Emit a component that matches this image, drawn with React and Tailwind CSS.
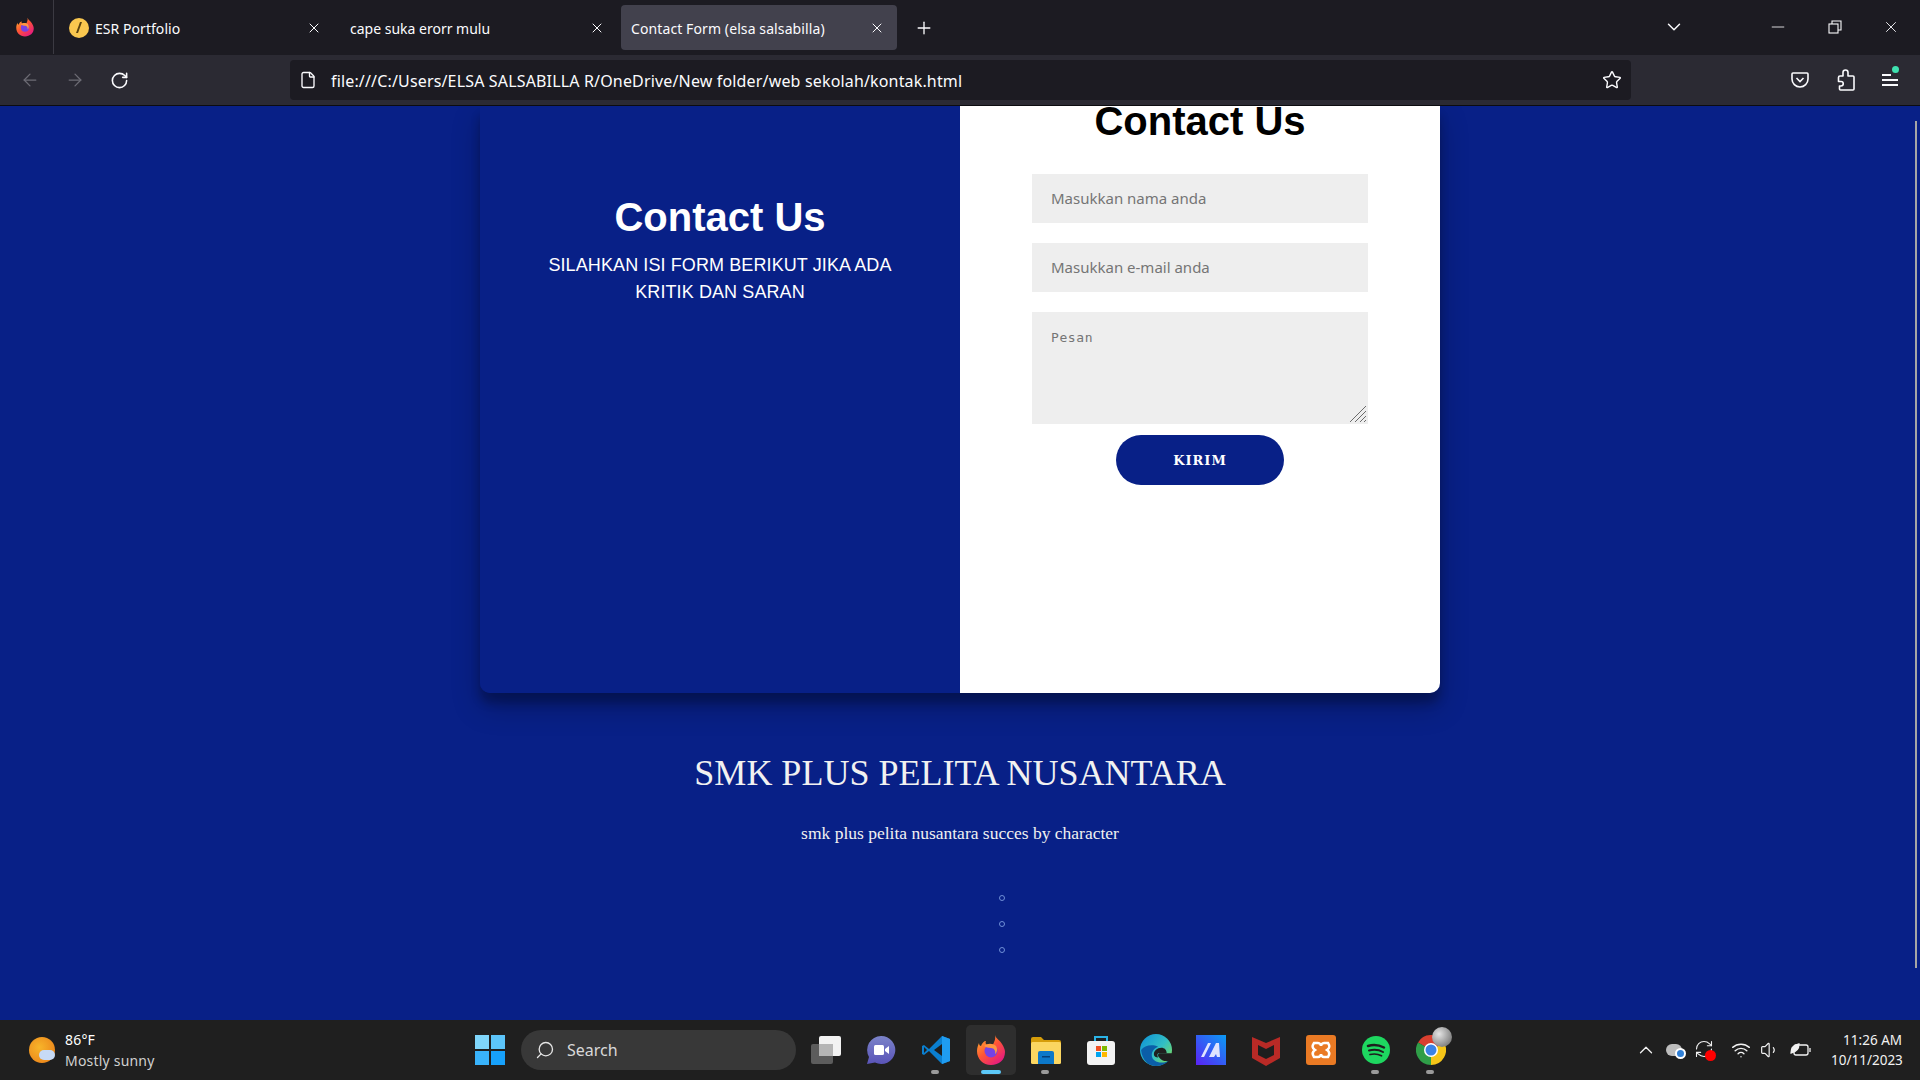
import React from 'react';
import { ArrowLeft, ArrowRight, RotateCw, RefreshCw, File, Star, X, Plus, ChevronDown, ChevronUp, Minus, Wifi, Volume1, Search } from 'lucide-react';

// --- browser chrome ---
function FirefoxLogo({ size = 20 }) {
  return (
    <svg width={size} height={size} viewBox="0 0 32 32">
      <defs>
        <linearGradient id="ffa" x1="0" y1="0" x2="0.8" y2="1">
          <stop offset="0" stopColor="#ffbd2e" />
          <stop offset="0.5" stopColor="#ff5634" />
          <stop offset="1" stopColor="#e31587" />
        </linearGradient>
      </defs>
      <path d="M20 1c1 4 5 5 7 9 2 3 3 6 3 8 0 8-6 13-14 13S2 25 2 17c0-3 1-6 2-8 0 2 1 3 2 3 1-3 3-5 5-5-1 2 0 3 1 4 2-1 4-1 6 0 1-3 3-6 2-10z" fill="url(#ffa)" />
      <circle cx="16" cy="17" r="6.500" fill="#7542e5" />
      <path d="M9 12c3-3 9-3 12 0 2 3 1 7-1 8 1-3-1-6-4-6-3 0-5-1-7-2z" fill="#ff9640" />
    </svg>
  );
}

function Tab({ title, icon, active, width, textClass, closeClass }) {
  return (
    <div className={`flex h-[45px] items-center rounded-[4px] ${width} ${active ? 'bg-[#42414d]' : ''}`}>
      {icon}
      <span className={`mt-[2px] flex-1 whitespace-nowrap text-[14px] leading-none text-[#fbfbfe] ${textClass}`}>{title}</span>
      <X size={16} strokeWidth={1.5} className={`text-[#fbfbfe] ${closeClass}`} />
    </div>
  );
}

function TabBar() {
  return (
    <div className="flex h-[55px] items-start bg-[#1c1b22] pt-[5px]">
      <div className="-mt-[5px] flex h-[54px] w-[54px] items-center justify-center border-r border-[#3b3a42] pr-[3px]">
        <FirefoxLogo size={20} />
      </div>
      <Tab
        width="w-[276px]"
        textClass="pl-[6px] tracking-[0.05px]"
        closeClass="mr-[8px]"
        title="ESR Portfolio"
        icon={
          <svg width="20" height="20" viewBox="0 0 20 20" className="ml-[15px]">
            <circle cx="10" cy="10" r="10" fill="#f9c74f" />
            <path d="M11 4 7 15h2l4-11z" fill="#5a4310" />
          </svg>
        }
      />
      <Tab width="w-[283px]" textClass="pl-[20px]" closeClass="mr-[8px]" title="cape suka erorr mulu" />
      <div className="w-[8px]" />
      <Tab width="w-[276px]" textClass="pl-[10px] tracking-[0.1px]" closeClass="mr-[12px]" title="Contact Form (elsa salsabilla)" active />
      <Plus size={20} strokeWidth={1.6} className="ml-[17px] mt-[13px] text-[#fbfbfe]" />
      <ChevronDown size={22} strokeWidth={1.6} className="ml-[729px] mt-[11px] text-[#fbfbfe]" />
      <Minus size={20} strokeWidth={1} className="ml-[83px] mt-[12px] text-[#fbfbfe]" />
      <svg width="14" height="14" viewBox="0 0 14 14" className="ml-[40px] mt-[15px] text-[#fbfbfe]" fill="none" stroke="currentColor" strokeWidth="1.1">
        <rect x="1" y="4" width="9" height="9" />
        <path d="M4 4V1h9v9h-3" />
      </svg>
      <X size={18} strokeWidth={1.2} className="ml-[40px] mt-[13px] text-[#fbfbfe]" />
    </div>
  );
}

function Toolbar() {
  return (
    <div className="flex h-[51px] items-start border-b border-[#0c0c10] bg-[#2b2a33] pt-[5px]">
      <div className="flex h-[40px] w-[290px] items-center">
        <ArrowLeft size={20} strokeWidth={1.5} className="ml-[20px] text-[#6d6c75]" />
        <ArrowRight size={20} strokeWidth={1.5} className="ml-[25px] text-[#6d6c75]" />
        <RotateCw size={19} strokeWidth={2} className="ml-[25px] text-[#fbfbfe]" />
      </div>
      <div className="flex h-[40px] w-[1341px] items-center rounded-[4px] bg-[#1c1b22]">
        <File size={18} strokeWidth={1.8} className="ml-[9px] text-[#fbfbfe]" />
        <span className="ml-[14px] mt-[2px] flex-1 whitespace-nowrap text-[16px] tracking-[0.16px] text-[#fbfbfe]">
          file:///C:/Users/ELSA SALSABILLA R/OneDrive/New folder/web sekolah/kontak.html
        </span>
        <Star size={20} strokeWidth={1.7} className="mr-[9px] text-[#fbfbfe]" />
      </div>
      <div className="relative flex h-[40px] flex-1 items-center">
        <svg width="18" height="18" viewBox="0 0 18 18" className="ml-[160px]" fill="none" stroke="#fbfbfe" strokeWidth="1.6">
          <path d="M2 2h14a1 1 0 0 1 1 1v5a8 8 0 0 1-16 0V3a1 1 0 0 1 1-1z" />
          <path d="M5.5 7 9 10.500 12.500 7" />
        </svg>
        <svg width="18" height="22" viewBox="0 0 18 22" className="ml-[28px]" fill="none" stroke="#fbfbfe" strokeWidth="1.6" strokeLinejoin="round">
          <path d="M6 3.500a2.500 2.500 0 0 1 5 0V7h5a1 1 0 0 1 1 1v12a1 1 0 0 1-1 1H3.500a1 1 0 0 1-1-1v-3H4a2.200 2.200 0 0 0 0-4.500H1.500V8.500A1.500 1.500 0 0 1 3 7h3z" />
        </svg>
        <div className="ml-[27px] flex w-[16px] flex-col gap-[3px]">
          <span className="h-[2px] w-[9px] bg-[#fbfbfe]" />
          <span className="h-[2px] bg-[#fbfbfe]" />
          <span className="h-[2px] bg-[#fbfbfe]" />
        </div>
        <span className="absolute left-[261px] top-[6px] h-[7px] w-[7px] rounded-full bg-[#3fe1b0]" />
      </div>
    </div>
  );
}

// --- page content ---
function ContactCard() {
  return (
    <div className="mx-auto flex h-[587px] w-[960px] overflow-hidden rounded-b-[10px] shadow-[0_14px_28px_rgba(0,0,0,0.25),0_10px_10px_rgba(0,0,0,0.22)]">
      <div className="flex w-[480px] flex-col items-center bg-[#082087] px-[40px] pt-[85px] text-center font-['Liberation_Sans'] text-white">
        <h1 className="text-[40px] font-bold leading-[52px]">Contact Us</h1>
        <p className="mt-[9px] w-[400px] text-[18px] leading-[27px] tracking-[0.1px]">SILAHKAN ISI FORM BERIKUT JIKA ADA KRITIK DAN SARAN</p>
      </div>
      <div className="flex w-[480px] flex-col items-center bg-white font-['Liberation_Sans']">
        <h1 className="-mt-[11px] text-[40px] font-bold leading-[52px] text-black">Contact Us</h1>
        <input
          placeholder="Masukkan nama anda"
          className="mt-[27px] h-[49px] w-[336px] bg-[#eeeeee] px-[19px] pb-[1px] font-['Noto_Sans'] text-[15px] outline-none placeholder:text-[#757575]"
        />
        <input
          placeholder="Masukkan e-mail anda"
          className="mt-[20px] h-[49px] w-[336px] bg-[#eeeeee] px-[19px] pb-[1px] font-['Noto_Sans'] text-[15px] outline-none placeholder:text-[#757575]"
        />
        <div className="relative mt-[20px] h-[112px] w-[336px]">
          <textarea
            placeholder="Pesan"
            className="block h-full w-full resize-none bg-[#eeeeee] px-[19px] py-[16px] font-['DejaVu_Sans_Mono'] text-[13px] tracking-[0.6px] outline-none placeholder:text-[#757575]"
          />
          {/* resize grip */}
          <svg width="18" height="18" viewBox="0 0 18 18" className="absolute bottom-[1px] right-[1px]" stroke="#6b6b6b" strokeWidth="1">
            <path d="M1 17 17 1M6 17 17 6M11 17l6-6M15 17l2-2" />
          </svg>
        </div>
        <button className="mt-[11px] h-[50px] w-[168px] rounded-[25px] bg-[#082087] pt-[2px] font-['DejaVu_Serif'] text-[13px] font-bold tracking-[1px] text-white">
          KIRIM
        </button>
      </div>
    </div>
  );
}

function Footer() {
  return (
    <div className="flex flex-col items-center pt-[57px] font-['Liberation_Serif'] text-[#f1f1f1]">
      <h2 className="text-[36px] leading-[46px]">SMK PLUS PELITA NUSANTARA</h2>
      <p className="mt-[23px] text-[17.5px] leading-[28px]">smk plus pelita nusantara succes by character</p>
      <ul className="mt-[48px] flex flex-col gap-[20px] pl-[84px]">
        <li className="h-[6px] w-[6px] rounded-full border border-[#6f8fd6]" />
        <li className="h-[6px] w-[6px] rounded-full border border-[#6f8fd6]" />
        <li className="h-[6px] w-[6px] rounded-full border border-[#6f8fd6]" />
      </ul>
    </div>
  );
}

// --- taskbar icons ---
function TaskSlot({ children, dot, active }) {
  return (
    <div className={`relative flex h-[50px] w-[50px] items-center justify-center rounded-[5px] ${active ? 'bg-[#2e2e2e]' : ''}`}>
      {children}
      {dot && <span className="absolute bottom-[1px] left-[20px] h-[4px] w-[8px] rounded-full bg-[#9a9a9a]" />}
      {active && <span className="absolute bottom-[1px] left-[15px] h-[4px] w-[20px] rounded-full bg-[#5cc8f8]" />}
    </div>
  );
}

const TaskView = () => (
  <svg width="32" height="30" viewBox="0 0 32 30">
    <rect x="1" y="9" width="22" height="20" rx="2" fill="#5c5c5c" />
    <rect x="9" y="1" width="22" height="20" rx="2" fill="#f2f2f2" />
    <rect x="9" y="9" width="14" height="12" fill="#b5b5b5" />
  </svg>
);

const Meet = () => (
  <svg width="30" height="30" viewBox="0 0 30 30">
    <defs>
      <linearGradient id="mt" x1="0" y1="0" x2="0" y2="1">
        <stop offset="0" stopColor="#7b83c9" />
        <stop offset="1" stopColor="#5a54b8" />
      </linearGradient>
    </defs>
    <path d="M15 1a14 14 0 1 1-6 26.500L1 29l2-7A14 14 0 0 1 15 1z" fill="url(#mt)" />
    <rect x="8" y="10" width="10" height="10" rx="1.500" fill="#fff" />
    <path d="m19 14 4-3v8l-4-3z" fill="#fff" />
  </svg>
);

const VSCode = () => (
  <svg width="30" height="30" viewBox="0 0 30 30">
    <path d="M21 1 8 14 3 10l-2 1v8l2 1 5-4 13 13 8-3V4z" fill="#0a7fd0" />
    <path d="M21 1l8 3v22l-8 3z" fill="#1f9cf0" />
    <path d="M21 9v12l-8-6z" fill="#1e1e1e" />
    <path d="M3 12l3 3-3 3z" fill="#1e1e1e" />
  </svg>
);

const Folder = () => (
  <svg width="30" height="28" viewBox="0 0 30 28">
    <path d="M0 3a2 2 0 0 1 2-2h8l3 3h15a2 2 0 0 1 2 2v3H0z" fill="#d69d0a" />
    <rect y="6" width="30" height="22" rx="1.500" fill="#fbd661" />
    <path d="M7 17a2 2 0 0 1 2-2h12a2 2 0 0 1 2 2v11H7z" fill="#0c78c9" />
    <rect x="11" y="20" width="8" height="1.500" fill="#063f78" />
  </svg>
);

const StoreIcon = () => (
  <svg width="30" height="30" viewBox="0 0 30 30">
    <path d="M9 6V2h12v4" fill="none" stroke="#2ab3e6" strokeWidth="2" />
    <rect x="1" y="6" width="28" height="24" rx="3" fill="#f3f3f3" />
    <rect x="10" y="11" width="5" height="5" fill="#f05022" />
    <rect x="16" y="11" width="5" height="5" fill="#7fba00" />
    <rect x="10" y="17" width="5" height="5" fill="#00a4ef" />
    <rect x="16" y="17" width="5" height="5" fill="#ffb900" />
  </svg>
);

const EdgeIcon = () => (
  <svg width="32" height="32" viewBox="0 0 30 30">
    <defs>
      <linearGradient id="ed" x1="0" y1="0" x2="1" y2="0.800">
        <stop offset="0" stopColor="#0c8fd8" />
        <stop offset="0.600" stopColor="#32bfc5" />
        <stop offset="1" stopColor="#7bdc5c" />
      </linearGradient>
    </defs>
    <circle cx="15" cy="15" r="15" fill="url(#ed)" />
    <path d="M30 18H19c-2 0-3 2-1 4 2 3 6 4 9 3 2-2 3-4 3-7z" fill="#1f1f1f" />
    <path d="M27 25c-3 3-7 5-12 5C7 30 2 24 1 15c3-4 10-6 16-3-3 1-6 4-6 8 0 6 9 9 16 5z" fill="#0b5ea8" />
    <path d="M13 19c0-3 3-6 7-6 3 0 5 2 5 5h-7c-2 0-2 2-1 4-2 0-4-1-4-3z" fill="#1f1f1f" />
  </svg>
);

const MAIcon = () => (
  <svg width="30" height="30" viewBox="0 0 30 30">
    <defs>
      <linearGradient id="ma" x1="0" y1="1" x2="1" y2="0">
        <stop offset="0" stopColor="#5b21f5" />
        <stop offset="1" stopColor="#0a9cf5" />
      </linearGradient>
    </defs>
    <rect width="30" height="30" fill="url(#ma)" />
    <path d="M5 22 12 8h3L8 22zM13 22 20 8h3l1 14h-3l-1-3-2 3z" fill="#dfe3ff" />
  </svg>
);

const McAfee = () => (
  <svg width="28" height="32" viewBox="0 0 28 32">
    <path d="M0 3 14 9 28 3v21l-14 8-14-8z" fill="#b92a26" />
    <path d="M6 11v10l8 4 8-4V11l-8 4z" fill="#1e1e1e" />
  </svg>
);

const Xampp = () => (
  <svg width="30" height="30" viewBox="0 0 30 30">
    <rect width="30" height="30" rx="3" fill="#ea7a24" />
    <path d="M8 8h4c2 0 3 2 3 3 0-1 1-3 3-3h4c2 3 2 5-1 7 3 2 3 4 1 7h-4c-2 0-3-2-3-3 0 1-1 3-3 3H8c-2-3-2-5 1-7-3-2-3-4-1-7z" fill="none" stroke="#fff" strokeWidth="2.500" />
  </svg>
);

const Spotify = () => (
  <svg width="28" height="28" viewBox="0 0 28 28">
    <circle cx="14" cy="14" r="14" fill="#1ed760" />
    <g fill="none" stroke="#1e1e1e" strokeLinecap="round">
      <path d="M6 10c5-1.500 11-1 16 1.500" strokeWidth="2.500" />
      <path d="M7 14.500c4-1 10-.8 14 1.500" strokeWidth="2" />
      <path d="M8 18.500c3.500-.8 8-.6 11.500 1.300" strokeWidth="1.700" />
    </g>
  </svg>
);

const Chrome = () => (
  <div className="relative h-[30px] w-[30px]">
    <svg width="30" height="30" viewBox="0 0 30 30">
      <path d="M15 15 2 7.500A15 15 0 0 1 28 7.500z" fill="#d93f2f" />
      <path d="M15 15 28 7.500A15 15 0 0 1 15 30z" fill="#f5c518" />
      <path d="M15 15 15 30A15 15 0 0 1 2 7.500z" fill="#2f9e48" />
      <circle cx="15" cy="15" r="7" fill="#fff" />
      <circle cx="15" cy="15" r="5.500" fill="#3b82e6" />
    </svg>
    <span className="absolute -right-[6px] -top-[8px] h-[20px] w-[20px] rounded-full bg-[radial-gradient(circle_at_35%_35%,#e5e5e5,#5e5e5e)]" />
  </div>
);

const Windows = () => (
  <div className="grid h-[30px] w-[30px] grid-cols-2 gap-[2px]">
    <span className="bg-[#7fd6fb]" />
    <span className="bg-[#5cc5fa]" />
    <span className="bg-[#39b3fb]" />
    <span className="bg-[#17a1fb]" />
  </div>
);

function Taskbar() {
  return (
    <div className="flex h-[60px] items-center bg-[#1f1f1f] text-white">
      <div className="flex w-[475px] items-center pl-[29px]">
        <div className="relative h-[26px] w-[26px] rounded-full bg-[radial-gradient(circle_at_40%_40%,#f7b52a,#e97a17)]">
          <span className="absolute bottom-[3px] right-0 h-[10px] w-[16px] rounded-full bg-[#c7daf5]" />
        </div>
        <div className="ml-[10px] font-['Noto_Sans'] text-[14px] leading-[21px] tracking-[0.2px]">
          <div className="text-[#ffffff]">86°F</div>
          <div className="text-[#d0d0d0]">Mostly sunny</div>
        </div>
      </div>
      <Windows />
      <div className="ml-[16px] flex h-[40px] w-[275px] items-center rounded-full bg-[#383838]">
        <Search size={20} strokeWidth={1.6} className="ml-[14px] -scale-x-100 text-[#e6e6e6]" />
        <span className="ml-[12px] font-['Noto_Sans'] text-[16px] text-[#d8d8d8]">Search</span>
      </div>
      <div className="ml-[5px] flex gap-[5px]">
        <TaskSlot><TaskView /></TaskSlot>
        <TaskSlot><Meet /></TaskSlot>
        <TaskSlot dot><VSCode /></TaskSlot>
        <TaskSlot active><FirefoxLogo size={32} /></TaskSlot>
        <TaskSlot dot><Folder /></TaskSlot>
        <TaskSlot><StoreIcon /></TaskSlot>
        <TaskSlot><EdgeIcon /></TaskSlot>
        <TaskSlot><MAIcon /></TaskSlot>
        <TaskSlot><McAfee /></TaskSlot>
        <TaskSlot><Xampp /></TaskSlot>
        <TaskSlot dot><Spotify /></TaskSlot>
        <TaskSlot dot><Chrome /></TaskSlot>
      </div>
      <div className="ml-[172px] flex flex-1 items-center text-[#f2f2f2]">
        <ChevronUp size={22} strokeWidth={1.4} className="ml-[7px]" />
        <div className="relative ml-[9px] h-[18px] w-[20px]">
          <span className="absolute left-0 top-[3px] h-[12px] w-[16px] rounded-full bg-[#bdbdbd]" />
          <span className="absolute bottom-0 right-0 h-[11px] w-[11px] rounded-full border-2 border-white bg-[#2f7fd6]" />
        </div>
        <div className="relative ml-[8px] h-[22px] w-[22px]">
          <RefreshCw size={20} strokeWidth={1.3} />
          <span className="absolute bottom-0 right-0 h-[11px] w-[11px] rounded-full bg-[#ff0000]" />
        </div>
        <Wifi size={20} strokeWidth={1.7} className="ml-[15px]" />
        <Volume1 size={20} strokeWidth={1.4} className="ml-[9px]" />
        <svg width="22" height="16" viewBox="0 0 22 16" className="ml-[10px]" fill="none" stroke="#f2f2f2" strokeWidth="1.300">
          <rect x="4" y="3" width="14" height="10" rx="2" />
          <path d="M20 6v4" />
          <path d="M1 11c0-5 3-8 8-9 0 5-3 8-8 9z" fill="#f2f2f2" />
        </svg>
        <div className="ml-[19px] w-[71px] whitespace-nowrap text-right font-['Noto_Sans'] text-[13.500px] leading-[20px]">
          <div>11:26 AM</div>
          <div>10/11/2023</div>
        </div>
      </div>
    </div>
  );
}

export default function App() {
  return (
    <div className="flex h-[1080px] w-[1920px] flex-col overflow-hidden bg-[#082087] font-['Noto_Sans']">
      <TabBar />
      <Toolbar />
      <main className="relative h-[914px] overflow-hidden">
        <ContactCard />
        <Footer />
        {/* overlay scrollbar */}
        <div className="absolute right-[3px] top-[15px] h-[847px] w-[2px] bg-[#a6a6a6]" />
      </main>
      <Taskbar />
    </div>
  );
}
